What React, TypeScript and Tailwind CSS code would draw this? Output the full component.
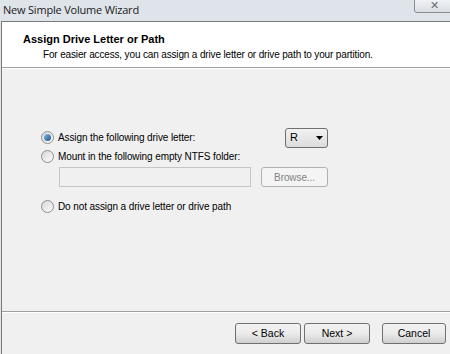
import React from "react";

const Radio = ({ checked }: { checked?: boolean }) => (
    <span className="w-[13px] h-[13px] rounded-full border border-[#8e8f8f] bg-gradient-to-br from-[#d8d8d8] to-[#fbfbfb] flex items-center justify-center shrink-0">
        {checked ? <span className="w-[7px] h-[7px] rounded-full bg-gradient-to-br from-[#8cbde6] to-[#1b4f8c]"></span> : null}
    </span>
);

const WinButton = ({ label, className }: { label: string; className?: string }) => (
    <div className={`h-[21px] rounded-[3px] border border-[#707070] bg-gradient-to-b from-[#f2f2f2] via-[#ebebeb] to-[#cfcfcf] flex items-center justify-center text-[10.5px] text-black ${className ?? ""}`}>
        {label}
    </div>
);

export default function App() {
    return (
        <div className="w-[450px] h-[354px] overflow-hidden bg-[#dfe4ea] font-['Liberation_Sans',Arial,sans-serif] flex flex-col">
            <div className="h-[21px] flex items-start justify-between relative">
                <span className="pl-[3px] pt-[2px] text-[11px] text-[#1a1a1a] font-['Open_Sans',sans-serif] tracking-[-0.2px]">New Simple Volume Wizard</span>
                <div className="absolute right-[-4px] top-[-3px] w-[40px] h-[16px] rounded-[3px] border border-[#8a8e94] bg-gradient-to-b from-[#f4f6f8] to-[#d9dde2] flex items-center justify-center text-[11px] text-[#6a6e73]">✕</div>
            </div>
            <div className="flex-1 ml-[1px] border-l border-t border-[#7a7a7a] bg-[#f0f0f0] flex flex-col">
                <div className="h-[46px] bg-white border-b border-[#a0a0a0] pl-[21px] pt-[11px]">
                    <div className="text-[11px] font-bold text-black leading-[13px]">Assign Drive Letter or Path</div>
                    <div className="text-[10px] tracking-[-0.15px] text-black leading-[13px] pl-[20px] mt-[2px]">For easier access, you can assign a drive letter or drive path to your partition.</div>
                </div>
                <div className="h-px bg-white"></div>
                <div className="flex-1 flex flex-col pl-[39px] pt-[58px] text-[10px] tracking-[-0.1px] text-black">
                    <div className="flex items-center h-[21px]">
                        <Radio checked />
                        <span className="ml-[4px] w-[227px]">Assign the following drive letter:</span>
                        <div className="w-[43px] h-[20px] rounded-[3px] border border-[#707070] bg-gradient-to-b from-[#f2f2f2] to-[#dcdcdc] flex items-center justify-between pl-[4px] pr-[4px] text-[11px]">
                            <span>R</span>
                            <svg width="7" height="4" viewBox="0 0 7 4"><path d="M0 0h7L3.5 4z" fill="#000" /></svg>
                        </div>
                    </div>
                    <div className="flex items-center h-[14px] mt-[1px]">
                        <Radio />
                        <span className="ml-[4px]">Mount in the following empty NTFS folder:</span>
                    </div>
                    <div className="flex items-center mt-[4px] ml-[18px]">
                        <div className="w-[192px] h-[20px] border border-[#c5c5c5] bg-[#f0f0f0]"></div>
                        <div className="ml-[10px] w-[67px] h-[20px] rounded-[3px] border border-[#adb2b5] bg-[#f4f4f4] flex items-center justify-center text-[#838383]">Browse...</div>
                    </div>
                    <div className="flex items-center h-[14px] mt-[12px]">
                        <Radio />
                        <span className="ml-[4px]">Do not assign a drive letter or drive path</span>
                    </div>
                </div>
                <div className="h-px bg-[#a0a0a0]"></div>
                <div className="h-px bg-white"></div>
                <div className="h-[41px] flex items-start pt-[10px] pl-[233px]">
                    <WinButton label="< Back" className="w-[66px]" />
                    <WinButton label="Next >" className="w-[66px] ml-[3px]" />
                    <WinButton label="Cancel" className="w-[64px] ml-[12px]" />
                </div>
            </div>
        </div>
    );
}
